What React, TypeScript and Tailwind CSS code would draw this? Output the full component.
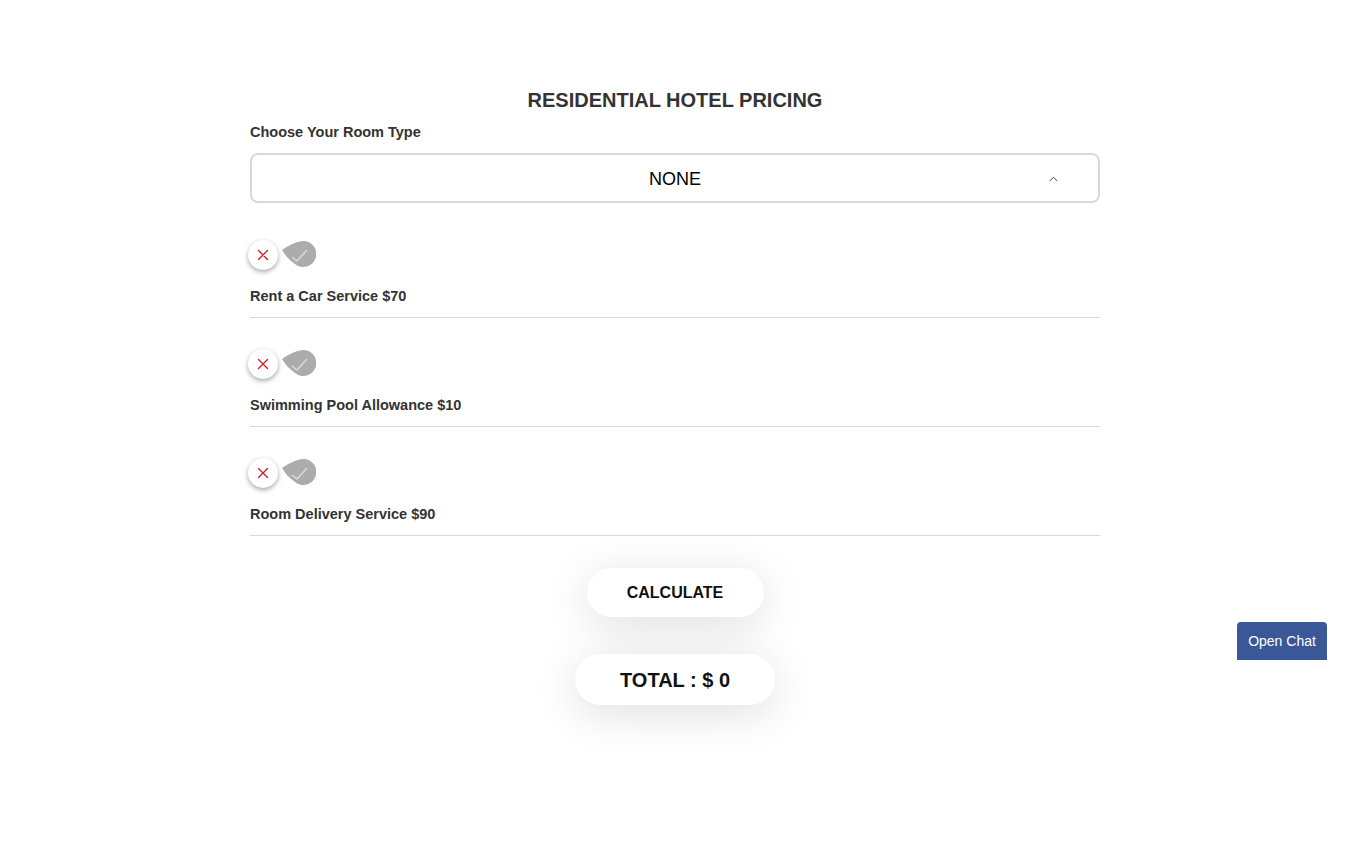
import React from "react";

const items = [
  "Rent a Car Service $70",
  "Swimming Pool Allowance $10",
  "Room Delivery Service $90",
];

function Toggle() {
  return (
    <div className="flex items-center h-[30px]">
      <div className="w-[30px] h-[30px] rounded-full bg-white shadow-[0_2px_5px_rgba(0,0,0,0.35)] flex items-center justify-center">
        <svg width="12" height="12" viewBox="0 0 12 12">
          <path d="M1.5 1.5 L10.5 10.5 M10.5 1.5 L1.5 10.5" stroke="#d0202a" strokeWidth="1.4" strokeLinecap="round" />
        </svg>
      </div>
      <svg width="36" height="30" viewBox="0 0 36 30" className="ml-[2px]">
        <path d="M2 10 C 8 6, 14 2, 23 1 A13 13 0 1 1 15 24 C 9 20, 5 15, 2 10 Z" fill="#acacac" />
        <path d="M12 17 L17 21 L27 10" stroke="#dcdcdc" strokeWidth="1.4" fill="none" />
      </svg>
    </div>
  );
}

export default function App() {
  return (
    <div className="min-h-[868px] bg-white relative pl-[2px]" style={{ fontFamily: '"Liberation Sans", Arial, sans-serif' }}>
      <div className="mx-auto w-[850px] pt-[89px]">
        <h1 className="text-center text-[20px] leading-[23px] font-bold text-[#333]">RESIDENTIAL HOTEL PRICING</h1>
        <div className="mt-[12px] text-[14.5px] leading-[16px] font-bold text-[#333]">Choose Your Room Type</div>
        <div className="mt-[13px] mb-[6px] h-[50px] border-2 border-[#d9d9d9] rounded-[8px] flex items-center relative">
          <div className="flex-1 text-center text-[18px] leading-[22px] pt-[2px] text-black">NONE</div>
          <svg className="absolute right-[40px] top-[21px]" width="9" height="6" viewBox="0 0 9 6">
            <path d="M0.8 5 L4.5 1.2 L8.2 5" stroke="#444" strokeWidth="1" fill="none" />
          </svg>
        </div>
        {items.map((t) => (
          <div key={t} className="pt-[31px] pb-[13px] border-b border-[#d9d9d9]">
            <div className="-ml-[2px]">
              <Toggle />
            </div>
            <div className="mt-[18px] text-[14.5px] leading-[16px] font-bold text-[#333]">{t}</div>
          </div>
        ))}
        <div className="flex flex-col items-center">
          <button className="mt-[32px] w-[177px] h-[49px] rounded-full bg-white shadow-[0_8px_45px_rgba(0,0,0,0.13)] text-[16px] font-bold text-[#111]">
            CALCULATE
          </button>
          <div className="mt-[37px] w-[200px] h-[51px] rounded-full bg-white shadow-[0_8px_45px_rgba(0,0,0,0.13)] flex items-center justify-center text-[20px] font-bold text-[#111]">
            TOTAL : $ 0
          </div>
        </div>
      </div>
      <div className="fixed right-[21px] top-[622px] w-[90px] h-[38px] bg-[#3a5898] rounded-t-[4px] flex items-center justify-center text-white text-[14px]">
        Open Chat
      </div>
    </div>
  );
}
